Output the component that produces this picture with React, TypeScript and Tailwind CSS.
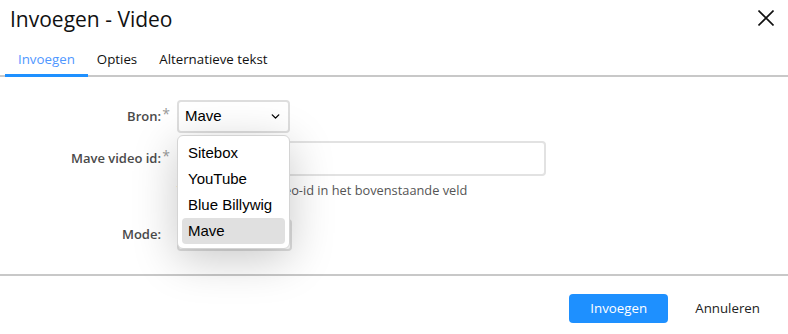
import { ChevronDown } from "lucide-react"

const labelCls = "w-[161px] shrink-0 text-right text-[13px] font-semibold text-[#4a4a4a]"

const Label = ({ text, req }: { text: string; req?: boolean }) => (
    <span className="relative">
        {text}
        {req && <span className="absolute -right-[9px] -top-[4px] text-[14px] font-normal text-[#9a9a9a]">*</span>}
    </span>
)

const options = ["Sitebox", "YouTube", "Blue Billywig", "Mave"]

const App = () => {
    return (
        <div
            className="relative w-[788px] h-[334px] overflow-hidden bg-white text-[#222]"
            style={{ fontFamily: "'Open Sans', 'Noto Sans', sans-serif" }}
        >
            {/* header */}
            <div className="flex items-start justify-between pl-[10px] pr-[14px] pt-[4px] h-[44px]">
                <h1 className="text-[21px] leading-[30px] font-normal text-[#111]">Invoegen - Video</h1>
                <button className="mt-[6px] text-[#111]">
                    <svg width="16" height="16" viewBox="0 0 16 16" fill="none" stroke="currentColor" strokeWidth="1.6">
                        <path d="M0.5 0.5L15.5 15.5M15.5 0.5L0.5 15.5" />
                    </svg>
                </button>
            </div>

            {/* tabs */}
            <div className="flex border-b-2 border-[#c8c8c8] pl-[5px] text-[13.3px] h-[33px]">
                <div className="px-[13px] pt-[6px] border-b-[3px] border-[#1e90ff] -mb-[2px] text-[#4f97ff]">Invoegen</div>
                <div className="pl-[9px] pr-[11px] pt-[6px] text-[#111]">Opties</div>
                <div className="pl-[11px] pt-[6px] text-[#111]">Alternatieve tekst</div>
            </div>

            {/* form */}
            <div className="flex flex-col pt-[23px] h-[197px]">
                <div className="flex items-center gap-[16px]">
                    <label className={labelCls}>
                        <Label text="Bron:" req />
                    </label>
                    <div
                        className="flex items-center justify-between w-[113px] h-[33px] rounded-[4px] border-2 border-[#dedede] pl-[6px] pr-[6px] text-[15px] text-black"
                        style={{ fontFamily: "'Liberation Sans', Arial, sans-serif" }}
                    >
                        <span>Mave</span>
                        <ChevronDown size={13} strokeWidth={2.5} />
                    </div>
                </div>

                <div className="flex items-start gap-[16px] mt-[8px]">
                    <label className={labelCls + " pt-[8px]"}>
                        <Label text="Mave video id:" req />
                    </label>
                    <div className="flex flex-col">
                        <div className="w-[369px] h-[35px] rounded-[4px] border-2 border-[#e2e2e2]" />
                        <p className="mt-[5px] text-[12.8px] text-[#555] whitespace-nowrap">Voer het Mave video-id in het bovenstaande veld</p>
                    </div>
                </div>

                <div className="flex items-center gap-[16px] mt-[19px]">
                    <label className={labelCls}>
                        <Label text="Mode:" />
                    </label>
                    <div className="w-[115px] h-[32px] rounded-[4px] border-2 border-[#dedede]" />
                </div>
            </div>

            {/* footer */}
            <div className="border-t-2 border-[#c8c8c8] flex items-center justify-end gap-[27px] pr-[28px] pt-[18px]">
                <button className="w-[99px] h-[29px] rounded-[4px] bg-[#1e90ff] text-white text-[13.3px]">Invoegen</button>
                <button className="text-[13.3px] text-[#222]">Annuleren</button>
            </div>

            {/* open select list */}
            <div
                className="absolute left-[177px] top-[135px] w-[113px] rounded-[6px] border border-[#d4d4d4] bg-white p-[4px] shadow-[0_10px_45px_rgba(0,0,0,0.22)] text-[15px] text-black"
                style={{ fontFamily: "'Liberation Sans', Arial, sans-serif" }}
            >
                {options.map((o) => (
                    <div
                        key={o}
                        className={
                            "h-[26px] flex items-center pl-[6px] rounded-[4px] " +
                            (o === "Mave" ? "bg-[#e0e0e0]" : "")
                        }
                    >
                        {o}
                    </div>
                ))}
            </div>
        </div>
    )
}

export default App
